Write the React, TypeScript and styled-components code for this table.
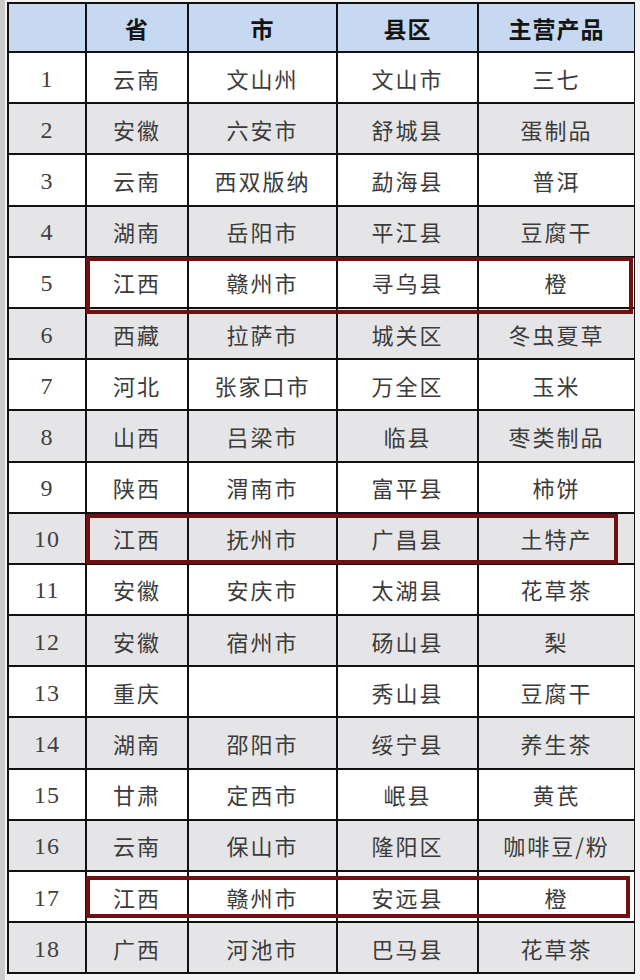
import styled, { createGlobalStyle } from "styled-components";

const GlobalStyle = createGlobalStyle`
  html, body {
    margin: 0;
    padding: 0;
    background: #f2f2f2;
  }
`;

type Highlight = { top: number; right: number; bottom: number };

type Entry = {
  no: number;
  province: string;
  city: string;
  county: string;
  product: string;
  mark?: Highlight;
};

const rows: Entry[] = [
  { no: 1, province: "云南", city: "文山州", county: "文山市", product: "三七" },
  { no: 2, province: "安徽", city: "六安市", county: "舒城县", product: "蛋制品" },
  { no: 3, province: "云南", city: "西双版纳", county: "勐海县", product: "普洱" },
  { no: 4, province: "湖南", city: "岳阳市", county: "平江县", product: "豆腐干" },
  { no: 5, province: "江西", city: "赣州市", county: "寻乌县", product: "橙", mark: { top: -1, right: 0, bottom: -7 } },
  { no: 6, province: "西藏", city: "拉萨市", county: "城关区", product: "冬虫夏草" },
  { no: 7, province: "河北", city: "张家口市", county: "万全区", product: "玉米" },
  { no: 8, province: "山西", city: "吕梁市", county: "临县", product: "枣类制品" },
  { no: 9, province: "陕西", city: "渭南市", county: "富平县", product: "柿饼" },
  { no: 10, province: "江西", city: "抚州市", county: "广昌县", product: "土特产", mark: { top: 0, right: 15, bottom: -1 } },
  { no: 11, province: "安徽", city: "安庆市", county: "太湖县", product: "花草茶" },
  { no: 12, province: "安徽", city: "宿州市", county: "砀山县", product: "梨" },
  { no: 13, province: "重庆", city: "", county: "秀山县", product: "豆腐干" },
  { no: 14, province: "湖南", city: "邵阳市", county: "绥宁县", product: "养生茶" },
  { no: 15, province: "甘肃", city: "定西市", county: "岷县", product: "黄芪" },
  { no: 16, province: "云南", city: "保山市", county: "隆阳区", product: "咖啡豆/粉" },
  { no: 17, province: "江西", city: "赣州市", county: "安远县", product: "橙", mark: { top: 4, right: 3, bottom: 3 } },
  { no: 18, province: "广西", city: "河池市", county: "巴马县", product: "花草茶" },
];

export default function App() {
  return (
    <>
      <GlobalStyle />
      <Frame>
        <Table>
          <HeadRow>
            <HeadCell />
            <HeadCell>省</HeadCell>
            <HeadCell>市</HeadCell>
            <HeadCell>县区</HeadCell>
            <HeadCell>主营产品</HeadCell>
          </HeadRow>
          {rows.map((r) => (
            <Row key={r.no} $even={r.no % 2 === 0} $marked={!!r.mark}>
              <NumCell>{r.no}</NumCell>
              <Cell>{r.province}</Cell>
              <Cell>{r.city}</Cell>
              <Cell>{r.county}</Cell>
              <Cell>{r.product}</Cell>
              {r.mark && (
                <Marker $top={r.mark.top} $right={r.mark.right} $bottom={r.mark.bottom} />
              )}
            </Row>
          ))}
        </Table>
      </Frame>
    </>
  );
}

const Frame = styled.div`
  width: 640px;
  min-height: 980px;
  box-sizing: border-box;
  padding: 2px 5px 8px 2px;
  border-left: 5px solid #cbcbcb;
  background: #f3f3f3;
`;

const Table = styled.div`
  display: flex;
  flex-direction: column;
  gap: 2px;
  width: 628px;
  box-sizing: border-box;
  border: 2px solid #111;
  background: #111;
`;

const columns = "76px 100px 147px 139px 155px";

const HeadRow = styled.div`
  display: grid;
  grid-template-columns: ${columns};
  gap: 2px;
  height: 47px;
`;

const HeadCell = styled.div`
  display: flex;
  align-items: center;
  justify-content: center;
  background: #c6d9f0;
  color: #141414;
  font-family: "Noto Sans CJK SC", "Noto Sans", sans-serif;
  font-weight: 700;
  font-size: 23px;
  letter-spacing: 1px;
`;

const Row = styled.div<{ $even: boolean; $marked: boolean }>`
  position: relative;
  z-index: ${(p) => (p.$marked ? 1 : 0)};
  display: grid;
  grid-template-columns: ${columns};
  gap: 2px;
  height: 49.2px;

  & > div {
    background: ${(p) => (p.$even ? "#e5e5e7" : "#ffffff")};
  }
`;

const Cell = styled.div`
  display: flex;
  align-items: center;
  justify-content: center;
  color: #3b3b3b;
  font-family: "Noto Sans CJK SC", "Noto Sans", sans-serif;
  font-weight: 400;
  font-size: 22px;
  line-height: 1;
  letter-spacing: 2px;
  white-space: nowrap;
`;

const NumCell = styled(Cell)`
  padding-top: 2px;
  font-family: "Liberation Serif", serif;
  font-size: 24px;
  letter-spacing: 1px;
  color: #404040;
`;

const Marker = styled.span<{ $top: number; $right: number; $bottom: number }>`
  position: absolute;
  z-index: 2;
  left: 77px;
  top: ${(p) => p.$top}px;
  right: ${(p) => p.$right}px;
  bottom: ${(p) => p.$bottom}px;
  border: 4px solid #701013;
  pointer-events: none;
`;
